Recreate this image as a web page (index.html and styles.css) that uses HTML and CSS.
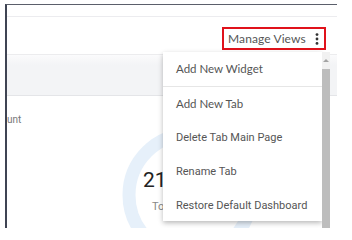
FILE: index.html
```html
<!DOCTYPE html>
<html lang="en">
<head>
    <meta charset="UTF-8">
    <title>Manage Views</title>
    <link rel="stylesheet" href="styles.css">
</head>
<body>
<div class="frame">
    <div class="topbar"></div>
    <div class="toolbar">
        <div class="manage">
            <span class="manage-text">Manage Views</span>
            <svg class="dots" width="4" height="12" viewBox="0 0 4 12">
                <circle cx="2" cy="1.6" r="1.4" fill="#333"/>
                <circle cx="2" cy="6" r="1.4" fill="#333"/>
                <circle cx="2" cy="10.4" r="1.4" fill="#333"/>
            </svg>
        </div>
    </div>
    <div class="tabband"></div>
    <div class="content">
        <div class="label">unt</div>
        <svg class="ring" width="150" height="150" viewBox="0 0 150 150">
            <circle cx="75" cy="75" r="61" fill="none" stroke="#e6f0fa" stroke-width="13"/>
        </svg>
        <div class="stat">
            <div class="num">21</div>
            <div class="cap">To</div>
        </div>
    </div>

    <div class="menu">
        <ul class="menu-list">
            <li class="geo first">Add New Widget</li>
            <li class="geo">Add New Tab</li>
            <li>Delete Tab Main Page</li>
            <li>Rename Tab</li>
            <li>Restore Default Dashboard</li>
        </ul>
        <div class="scrollbar">
            <div class="arrow"></div>
            <div class="thumb"></div>
        </div>
    </div>
</div>
</body>
</html>
```

FILE: styles.css
```css
* {
    margin: 0;
    padding: 0;
    list-style: none;
    box-sizing: border-box;
}

body {
    background-color: #fff;
    font-family: Roboto, "Liberation Sans", sans-serif;
}

.frame {
    position: relative;
    width: 332px;
    height: 224px;
    margin: 4px 0 0 5px;
    border-top: 1px solid #5b5f6b;
    border-left: 2px solid #3f4453;
    overflow: hidden;
}

.topbar {
    height: 12px;
    border-bottom: 1px solid #ececef;
}

.toolbar {
    height: 37px;
    display: flex;
    justify-content: flex-end;
    padding: 10px 11px 0 0;
}

.manage {
    width: 104px;
    height: 23px;
    border: 2px solid #e0121b;
    display: flex;
    align-items: center;
    padding: 0 0 0 4px;
}

.manage-text {
    font-family: Lato, "Open Sans", sans-serif;
    font-size: 12px;
    color: #555;
    letter-spacing: 0.1px;
}

.dots {
    margin-left: 9px;
}

.tabband {
    height: 42px;
    background: linear-gradient(#fbfbfc, #f3f4f6 25%);
    border-top: 1px solid #ececee;
    border-bottom: 1px solid #e4e5e8;
}

.content {
    position: relative;
    height: 134px;
}

.label {
    padding-top: 18px;
    font-size: 10px;
    color: #777;
}

.ring {
    position: absolute;
    left: 108px;
    top: 24px;
}

.stat {
    position: absolute;
    left: 136px;
    top: 72px;
}

.num {
    font-size: 21px;
    color: #222;
    line-height: 24px;
}

.cap {
    font-size: 11px;
    color: #888;
    margin: 8px 0 0 9px;
}

.menu {
    position: absolute;
    left: 156px;
    top: 47px;
    width: 168px;
    height: 181px;
    display: flex;
}

.menu-list {
    width: 159px;
    height: 169px;
    background-color: #fff;
    box-shadow: 0 2px 5px rgba(0, 0, 0, 0.28);
}

.menu-list li {
    height: 34px;
    line-height: 34px;
    padding-left: 13px;
    font-size: 11px;
    color: #555;
}

.menu-list li.first {
    height: 35px;
    border-bottom: 1px solid #e6e6e6;
}

.menu-list li.geo {
    font-family: Lato, "Open Sans", sans-serif;
    font-size: 11.5px;
}

.scrollbar {
    width: 8px;
    height: 181px;
    background-color: #f1f1f1;
    display: flex;
    flex-direction: column;
}

.arrow {
    height: 17px;
    display: flex;
    justify-content: center;
    align-items: center;
}

.arrow::before {
    content: "";
    border-left: 3px solid transparent;
    border-right: 3px solid transparent;
    border-bottom: 3px solid #a3a3a3;
}

.thumb {
    flex: 1;
    background-color: #bdbdbd;
}
```
